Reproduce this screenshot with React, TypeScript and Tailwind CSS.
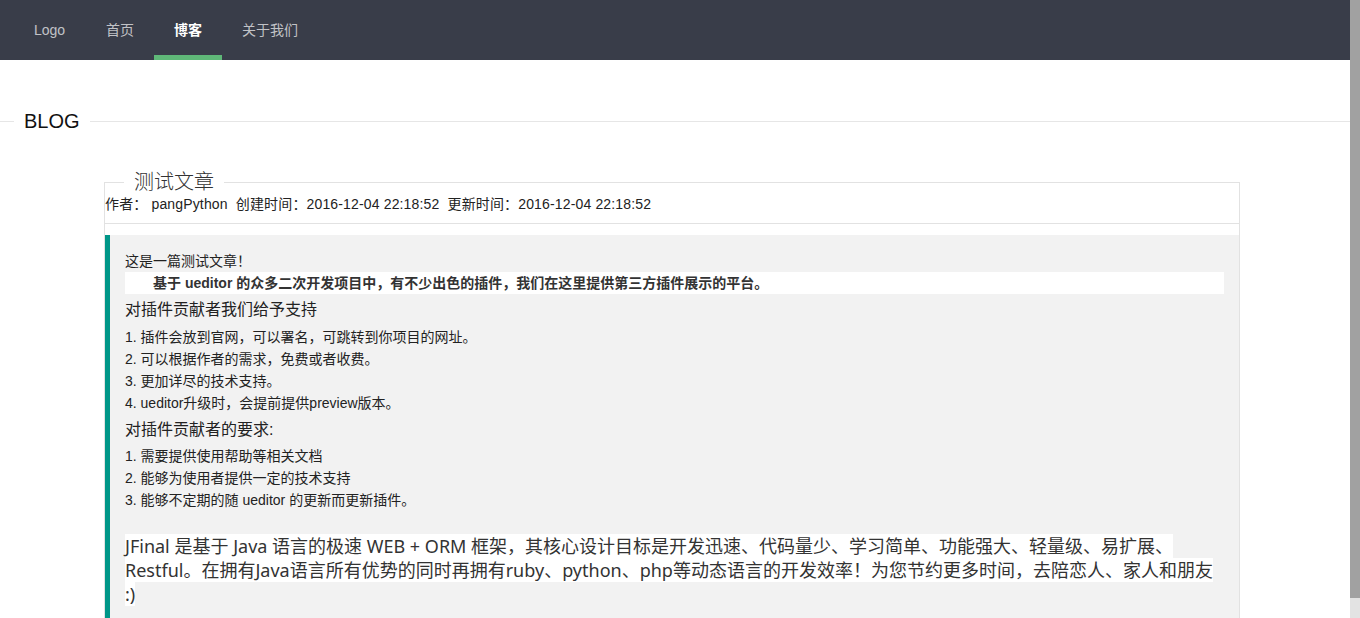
const NAV = [
  { label: "首页", active: false },
  { label: "博客", active: true },
  { label: "关于我们", active: false },
];

const SUPPORT = [
  "1. 插件会放到官网，可以署名，可跳转到你项目的网址。",
  "2. 可以根据作者的需求，免费或者收费。",
  "3. 更加详尽的技术支持。",
  "4. ueditor升级时，会提前提供preview版本。",
];

const REQUIRE = [
  "1. 需要提供使用帮助等相关文档",
  "2. 能够为使用者提供一定的技术支持",
  "3. 能够不定期的随 ueditor 的更新而更新插件。",
];

function Header() {
  return (
    <div className="h-[60px] bg-[#393D49]">
      <ul className="flex h-full pl-[14px] text-[14px]">
        <li className="w-[72px] pl-5 leading-[60px] text-white/70">Logo</li>
        {NAV.map((item) => (
          <li
            key={item.label}
            className={
              item.active
                ? "relative px-5 leading-[60px] font-bold text-white after:absolute after:bottom-0 after:left-0 after:right-0 after:h-[5px] after:bg-[#5FB878] after:content-['']"
                : "relative px-5 leading-[60px] text-white/70"
            }
          >
            {item.label}
          </li>
        ))}
      </ul>
    </div>
  );
}

function Article() {
  return (
    <fieldset className="ml-[104px] mt-[33px] w-[1136px] border border-[#e2e2e2] p-0">
      <legend className="ml-[19px] px-2.5 text-[20px] leading-[28px] font-light text-[#333]">
        测试文章
      </legend>
      <div className="text-[14px] leading-[17px] tracking-[0.15px] text-[#222]">
        作者： pangPython&nbsp;&nbsp;创建时间：2016-12-04 22:18:52&nbsp;&nbsp;更新时间：2016-12-04 22:18:52
      </div>
      <hr className="mt-[10px] mb-[11px] h-px border-0 bg-[#e2e2e2]" />
      <blockquote className="h-[400px] border-l-[5px] border-[#009688] bg-[#f2f2f2] p-[15px] text-[14px] leading-[22px] text-[#222]">
        <p>这是一篇测试文章！</p>
        <p className="bg-white indent-[2em] font-bold text-[#333]">
          基于 ueditor 的众多二次开发项目中，有不少出色的插件，我们在这里提供第三方插件展示的平台。
        </p>
        <h3 className="mt-[5px] mb-[5px] text-[16px] leading-[22px]">对插件贡献者我们给予支持</h3>
        {SUPPORT.map((line) => (
          <p key={line}>{line}</p>
        ))}
        <h3 className="mt-[5px] mb-[4px] text-[16px] leading-[22px]">对插件贡献者的要求:</h3>
        {REQUIRE.map((line) => (
          <p key={line}>{line}</p>
        ))}
        <p className="mt-[23px] font-['Noto_Sans','Noto_Sans_CJK_SC',sans-serif] text-[18px] leading-[24px] text-[#333]">
          <span className="bg-white">
            JFinal 是基于 Java 语言的极速 WEB + ORM 框架，其核心设计目标是开发迅速、代码量少、学习简单、功能强大、轻量级、易扩展、Restful。在拥有Java语言所有优势的同时再拥有ruby、python、php等动态语言的开发效率！为您节约更多时间，去陪恋人、家人和朋友 :)
          </span>
        </p>
      </blockquote>
    </fieldset>
  );
}

export default function App() {
  return (
    <div className="flex h-screen w-full overflow-hidden bg-white font-['Liberation_Sans','Noto_Sans_CJK_SC',sans-serif]">
      <div className="w-[1350px] shrink-0">
        <Header />
        <fieldset className="mt-[47px] border-t border-[#e6e6e6] p-0">
          <legend className="ml-[14px] px-2.5 text-[20px] leading-[28px] text-[#111]">
            BLOG
          </legend>
        </fieldset>
        <Article />
      </div>
      <div className="flex w-[10px] flex-col">
        <div className="flex-1 bg-[#a1a1a1]" />
        <div className="h-[20px] bg-[#e3e3e3]" />
      </div>
    </div>
  );
}
